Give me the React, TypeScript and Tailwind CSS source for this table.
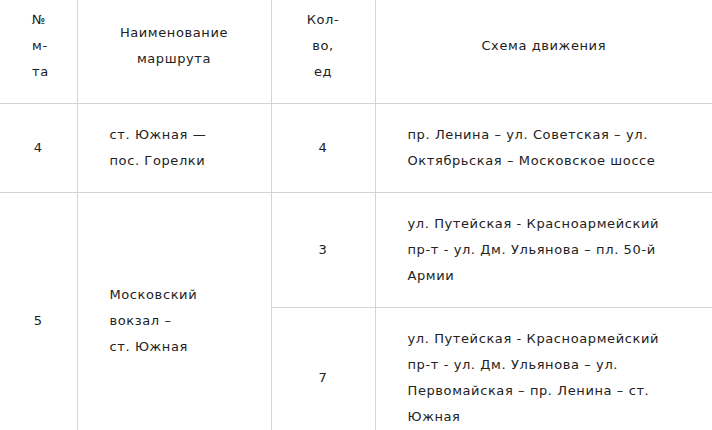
const cell = 'border-[#d4d4d4] px-[32px] py-[18px] align-middle';

export default function App() {
  return (
    <div className="w-[712px] h-[430px] overflow-hidden bg-white">
      <table
        className="-mt-[11px] w-[712px] table-fixed border-collapse text-[13px] leading-[26px] tracking-[0.6px] text-[#222]"
        style={{ fontFamily: '"DejaVu Sans", sans-serif' }}
      >
        <colgroup>
          <col className="w-[77px]" />
          <col className="w-[194px]" />
          <col className="w-[104px]" />
          <col />
        </colgroup>
        <thead>
          <tr>
            <th className={`${cell} border-r border-b text-center font-normal`}>
              №<br />м-<br />та
            </th>
            <th className={`${cell} border-r border-b text-center font-normal`}>
              Наименование<br />маршрута
            </th>
            <th className={`${cell} border-r border-b text-center font-normal`}>
              Кол-<br />во,<br />ед
            </th>
            <th className={`${cell} border-b text-center font-normal`}>Схема движения</th>
          </tr>
        </thead>
        <tbody>
          <tr>
            <td className={`${cell} border-r border-b text-center`}>4</td>
            <td className={`${cell} border-r border-b`}>
              ст. Южная —<br />пос. Горелки
            </td>
            <td className={`${cell} border-r border-b text-center`}>4</td>
            <td className={`${cell} border-b`}>
              пр. Ленина – ул. Советская – ул.<br />Октябрьская – Московское шоссе
            </td>
          </tr>
          <tr>
            <td rowSpan={2} className={`${cell} border-r text-center`}>5</td>
            <td rowSpan={2} className={`${cell} border-r`}>
              Московский<br />вокзал –<br />ст. Южная
            </td>
            <td className={`${cell} border-r border-b text-center`}>3</td>
            <td className={`${cell} border-b`}>
              ул. Путейская - Красноармейский<br />пр-т - ул. Дм. Ульянова – пл. 50-й<br />Армии
            </td>
          </tr>
          <tr>
            <td className={`${cell} border-r text-center`}>7</td>
            <td className={cell}>
              ул. Путейская - Красноармейский<br />пр-т - ул. Дм. Ульянова – ул.<br />Первомайская – пр. Ленина – ст.<br />Южная
            </td>
          </tr>
        </tbody>
      </table>
    </div>
  );
}
